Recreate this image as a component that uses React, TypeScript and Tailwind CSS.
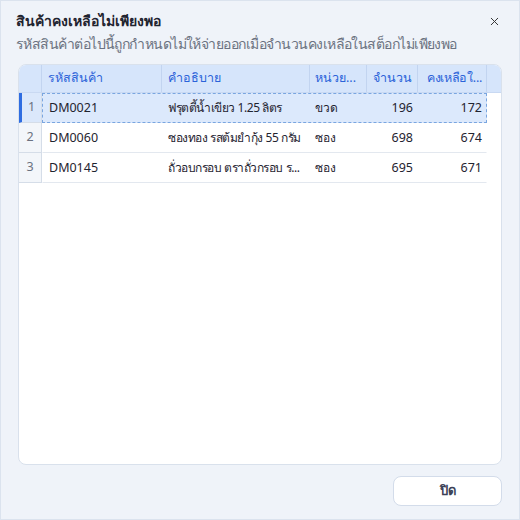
import { X } from 'lucide-react';

const rows = [
  { no: 1, code: 'DM0021', desc: 'ฟรุตตี้น้ำเขียว 1.25 ลิตร', unit: 'ขวด', qty: 196, left: 172 },
  { no: 2, code: 'DM0060', desc: 'ซองทอง รสต้มยำกุ้ง 55 กรัม', unit: 'ซอง', qty: 698, left: 674 },
  { no: 3, code: 'DM0145', desc: 'ถั่วอบกรอบ ตราถั่วกรอบ ร...', unit: 'ซอง', qty: 695, left: 671 },
];

function App() {
  return (
    <div
      className="w-[520px] h-[520px] bg-[#eff3f9] border border-[#dbe3ee] flex flex-col text-[#1f2430]"
      style={{ fontFamily: '"Noto Sans", "Liberation Sans", sans-serif' }}
    >
      <div className="flex items-start justify-between pl-[15px] pr-[18px] pt-[9px]">
        <div className="text-[14px] font-bold leading-[22px]">สินค้าคงเหลือไม่เพียงพอ</div>
        <X className="w-[13px] h-[13px] mt-[5px] text-[#333]" strokeWidth={1.8} />
      </div>
      <div className="pl-[15px] text-[14px] tracking-[-0.55px] leading-[24px] text-[#6b7280] whitespace-nowrap">
        รหัสสินค้าต่อไปนี้ถูกกำหนดไม่ให้จ่ายออกเมื่อจำนวนคงเหลือในสต็อกไม่เพียงพอ
      </div>

      <div className="mx-[17px] mt-[8px] h-[401px] bg-white border border-[#d9e1ec] rounded-[8px] overflow-hidden flex flex-col">
        <div className="flex h-[28px] bg-[#d6e5fb] text-[#2b63d9] text-[12.5px] border-b border-[#c9d9f2] whitespace-nowrap">
          <div className="w-[23px] border-r border-[#c2d4f0]" />
          <div className="w-[120px] px-[6px] flex items-center border-r border-[#c2d4f0]">รหัสสินค้า</div>
          <div className="w-[148px] px-[6px] flex items-center border-r border-[#c2d4f0]">คำอธิบาย</div>
          <div className="w-[57px] px-[5px] flex items-center border-r border-[#c2d4f0] overflow-hidden">หน่วย...</div>
          <div className="w-[51px] px-[5px] flex items-center justify-end border-r border-[#c2d4f0] overflow-hidden">จำนวน</div>
          <div className="w-[69px] px-[4px] flex items-center justify-end border-r border-[#c2d4f0] overflow-hidden tracking-[-0.3px]">
            คงเหลือใ...
          </div>
          <div className="flex-1" />
        </div>

        {rows.map((r, i) => {
          const sel = i === 0;
          return (
            <div key={r.no} className="flex h-[30px] text-[12.5px] whitespace-nowrap">
              <div
                className={`w-[23px] flex items-center justify-center text-[#6b7280] border-r border-b border-[#d5dde8] ${
                  sel ? 'bg-[#dbe8fb] border-l-[3px] border-l-[#2f6de1]' : 'bg-[#f3f6fa]'
                }`}
              >
                {r.no}
              </div>
              <div
                className={`w-[445px] flex border ${
                  sel
                    ? 'bg-[#dce9fc] border-dashed border-[#7aa6e0]'
                    : 'border-transparent border-b-[#e3e8ef]'
                }`}
              >
                <div className="w-[119px] px-[6px] flex items-center">{r.code}</div>
                <div className="w-[148px] px-[6px] flex items-center overflow-hidden text-[12px] tracking-[-0.45px]">
                  {r.desc}
                </div>
                <div className="w-[57px] px-[5px] flex items-center text-[12px]">{r.unit}</div>
                <div className="w-[51px] px-[5px] flex items-center justify-end">{r.qty}</div>
                <div className="w-[68px] px-[4px] flex items-center justify-end">{r.left}</div>
              </div>
            </div>
          );
        })}
      </div>

      <div className="flex justify-end pr-[17px] mt-[11px]">
        <button className="w-[109px] h-[30px] bg-white border border-[#d3dcea] rounded-[8px] text-[13px] font-semibold text-[#3b4256]">
          ปิด
        </button>
      </div>
    </div>
  );
}

export default App;
